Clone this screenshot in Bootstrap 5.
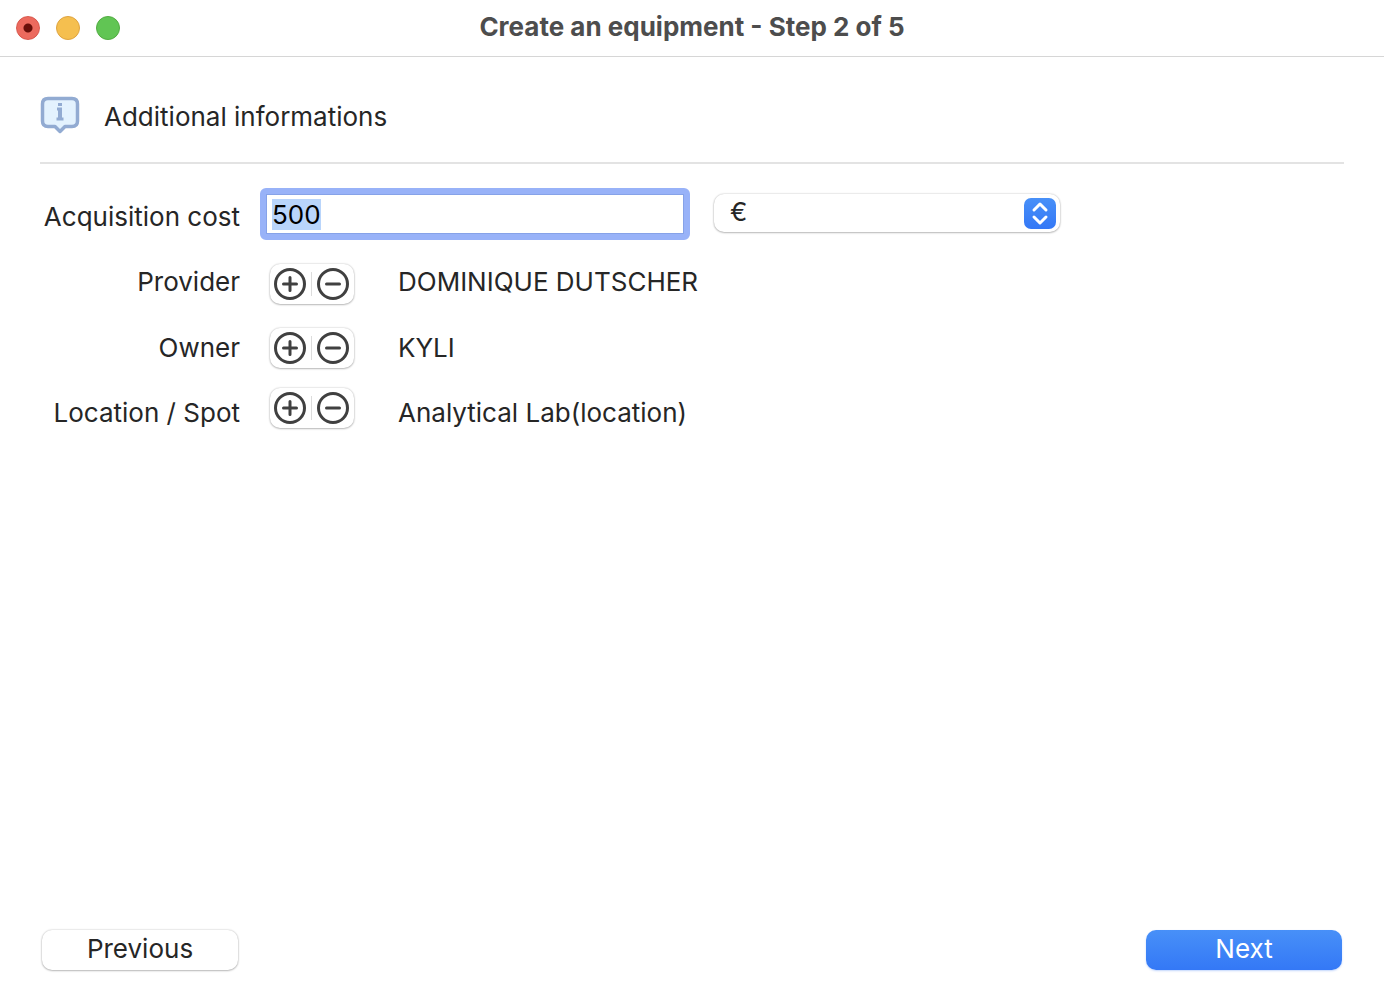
<!DOCTYPE html>
<html lang="en">
<head>
<meta charset="utf-8">
<meta name="viewport" content="width=device-width, initial-scale=1">
<title>Create an equipment - Step 2 of 5</title>
<link href="https://cdn.jsdelivr.net/npm/bootstrap@5.3.0/dist/css/bootstrap.min.css" rel="stylesheet">
<style>
  body { font-family: Inter, "Noto Sans", sans-serif; font-size: 26px; line-height: 36px; color: #262626; background: #fff; }
  .titlebar { height: 57px; border-bottom: 1px solid #d6d6d6; padding-left: 16px; }
  .titlebar h1 { font-size: 26px; line-height: 36px; font-weight: 700; color: #4d4d4d; padding-bottom: 2px; }
  .lights { flex: 1 0 0; gap: 16px; }
  .light { width: 24px; height: 24px; padding: 0; border-radius: 50%; border: 1px solid; }
  .light-close { background: radial-gradient(circle, #690f0a 0 4px, #ec6a5e 5px); border-color: #d9574c; }
  .light-min { background: #f5bf4f; border-color: #dfa440; }
  .light-max { background: #61c554; border-color: #52ac42; }
  .pane { padding: 38px 40px; }
  .section-head { gap: 24px; padding-bottom: 27px; border-bottom: 2px solid #e3e3e3; }
  .section-head h2 { font-size: 26px; line-height: 36px; font-weight: 400; padding-top: 4px; }
  .wizard-form { padding-top: 24px; }
  .caption { width: 200px; flex: none; text-align: right; }
  .cost-caption { padding-top: 6px; }
  .cost-input { width: 430px; height: 52px; line-height: 32px; margin-left: 20px; padding: 4px 6px; border: 6px solid #98b2f8; border-radius: 6px; background: #fff; color: #000; outline: 0; box-shadow: inset 0 0 0 1px #86a2e8; min-width: 0; }
  .cost-input::selection { background: #b9d5fb; color: #000; }
  .raised { background: #fff; border: 0; border-radius: 10px; box-shadow: 0 0 2px rgba(0,0,0,.25), 0 1px 2px rgba(0,0,0,.22); }
  .currency { width: 346px; margin-left: 24px; padding-bottom: 2px; }
  .currency select { width: 100%; height: 38px; line-height: 32px; padding: 0 48px 2px 16px; appearance: none; color: #262626; display: block; }
  .currency svg { right: 4px; top: 4px; pointer-events: none; }
  .segment { margin: 0 44px 0 30px; height: 40px; width: 84px; flex: none; padding: 0 5px 0 4px; }
  .segment button { width: 32px; height: 32px; padding: 0; border: 0; background: none; display: block; }
  .segment .divider { width: 1px; height: 24px; background: #dcdcdc; }
  .wizard-btn { width: 196px; height: 40px; padding: 0 0 2px; line-height: 36px; color: #262626; }
  .wizard-next { border: 0; border-radius: 10px; color: #fff; background: linear-gradient(#4890f8, #3478f6); box-shadow: 0 1px 2px rgba(52,120,246,.3); }
  .form-line { margin-top: 24px; min-height: 40px; }
  .line-last { margin-top: 20px; min-height: 43px; }
  .wizard-actions { padding: 0 2px; }
</style>
</head>
<body>
<svg class="d-none" aria-hidden="true">
  <symbol id="plus" viewBox="0 0 32 32"><g fill="none" stroke="#404040" stroke-width="3" stroke-linecap="round"><circle cx="16" cy="16" r="14.500"/><path d="M9.500 16h13M16 9.500v13"/></g></symbol>
  <symbol id="minus" viewBox="0 0 32 32"><g fill="none" stroke="#404040" stroke-width="3" stroke-linecap="round"><circle cx="16" cy="16" r="14.500"/><path d="M9.500 16h13"/></g></symbol>
</svg>
<div class="d-flex flex-column min-vh-100">
  <header class="titlebar d-flex align-items-center">
    <div class="lights d-flex">
      <button type="button" class="light light-close" aria-label="Close"></button>
      <button type="button" class="light light-min" aria-label="Minimize"></button>
      <button type="button" class="light light-max" aria-label="Zoom"></button>
    </div>
    <h1 class="m-0 text-center">Create an equipment - Step 2 of 5</h1>
    <div class="lights pe-3"></div>
  </header>
  <main class="pane flex-grow-1 d-flex flex-column">
    <div class="section-head d-flex align-items-start">
      <svg width="40" height="40" viewBox="0 0 40 40" aria-hidden="true">
        <path d="M8 3.500h24q5.500 0 5.500 5.500v17q0 5.500-5.500 5.500h-7L20 36.500l-5-5H8q-5.500 0-5.500-5.500V9Q2.500 3.500 8 3.500z" fill="#e3f2fe" stroke="#92abd2" stroke-width="3.500" stroke-linejoin="round"/>
        <path d="M18 8h4v3h-4zM17 12.500h5v10h1.500v3h-7v-3H18v-7h-1z" fill="#92abd2"/>
      </svg>
      <h2 class="m-0">Additional informations</h2>
    </div>
    <form class="wizard-form flex-grow-1 d-flex flex-column">
      <div class="d-flex align-items-center">
        <label class="caption cost-caption" for="cost">Acquisition cost</label>
        <input class="cost-input" id="cost" type="text" value="500" autofocus>
        <div class="currency position-relative">
          <select class="raised" aria-label="Currency"><option>€</option></select>
          <svg class="position-absolute" width="32" height="32" viewBox="0 0 32 32" aria-hidden="true">
            <defs><linearGradient id="knob" x2="0" y2="1"><stop stop-color="#4890f8"/><stop offset="1" stop-color="#3478f6"/></linearGradient></defs>
            <rect width="32" height="31" rx="7" fill="url(#knob)"/>
            <path d="M10 12l6-6 6 6M10 19l6 6 6-6" fill="none" stroke="#fff" stroke-width="3" stroke-linecap="round" stroke-linejoin="round"/>
          </svg>
        </div>
      </div>
      <div class="form-line d-flex align-items-start">
        <span class="caption">Provider</span>
        <div class="segment raised d-flex align-items-center justify-content-between" role="group" aria-label="Provider">
          <button type="button" aria-label="Add provider"><svg class="d-block" width="32" height="32"><use href="#plus"/></svg></button>
          <span class="divider"></span>
          <button type="button" aria-label="Remove provider"><svg class="d-block" width="32" height="32"><use href="#minus"/></svg></button>
        </div>
        <span>DOMINIQUE DUTSCHER</span>
      </div>
      <div class="form-line d-flex align-items-center">
        <span class="caption">Owner</span>
        <div class="segment raised d-flex align-items-center justify-content-between" role="group" aria-label="Owner">
          <button type="button" aria-label="Add owner"><svg class="d-block" width="32" height="32"><use href="#plus"/></svg></button>
          <span class="divider"></span>
          <button type="button" aria-label="Remove owner"><svg class="d-block" width="32" height="32"><use href="#minus"/></svg></button>
        </div>
        <span>KYLI</span>
      </div>
      <div class="line-last d-flex align-items-end">
        <span class="caption">Location / Spot</span>
        <div class="segment raised d-flex align-items-center justify-content-between align-self-start" role="group" aria-label="Location">
          <button type="button" aria-label="Add location"><svg class="d-block" width="32" height="32"><use href="#plus"/></svg></button>
          <span class="divider"></span>
          <button type="button" aria-label="Remove location"><svg class="d-block" width="32" height="32"><use href="#minus"/></svg></button>
        </div>
        <span>Analytical Lab(location)</span>
      </div>
      <div class="wizard-actions d-flex justify-content-between mt-auto">
        <button type="button" class="wizard-btn raised">Previous</button>
        <button type="submit" class="wizard-btn wizard-next">Next</button>
      </div>
    </form>
  </main>
</div>
<script src="https://cdn.jsdelivr.net/npm/bootstrap@5.3.0/dist/js/bootstrap.bundle.min.js"></script>
<script>
  const cost = document.getElementById('cost');
  cost.focus();
  cost.select();
</script>
</body>
</html>
